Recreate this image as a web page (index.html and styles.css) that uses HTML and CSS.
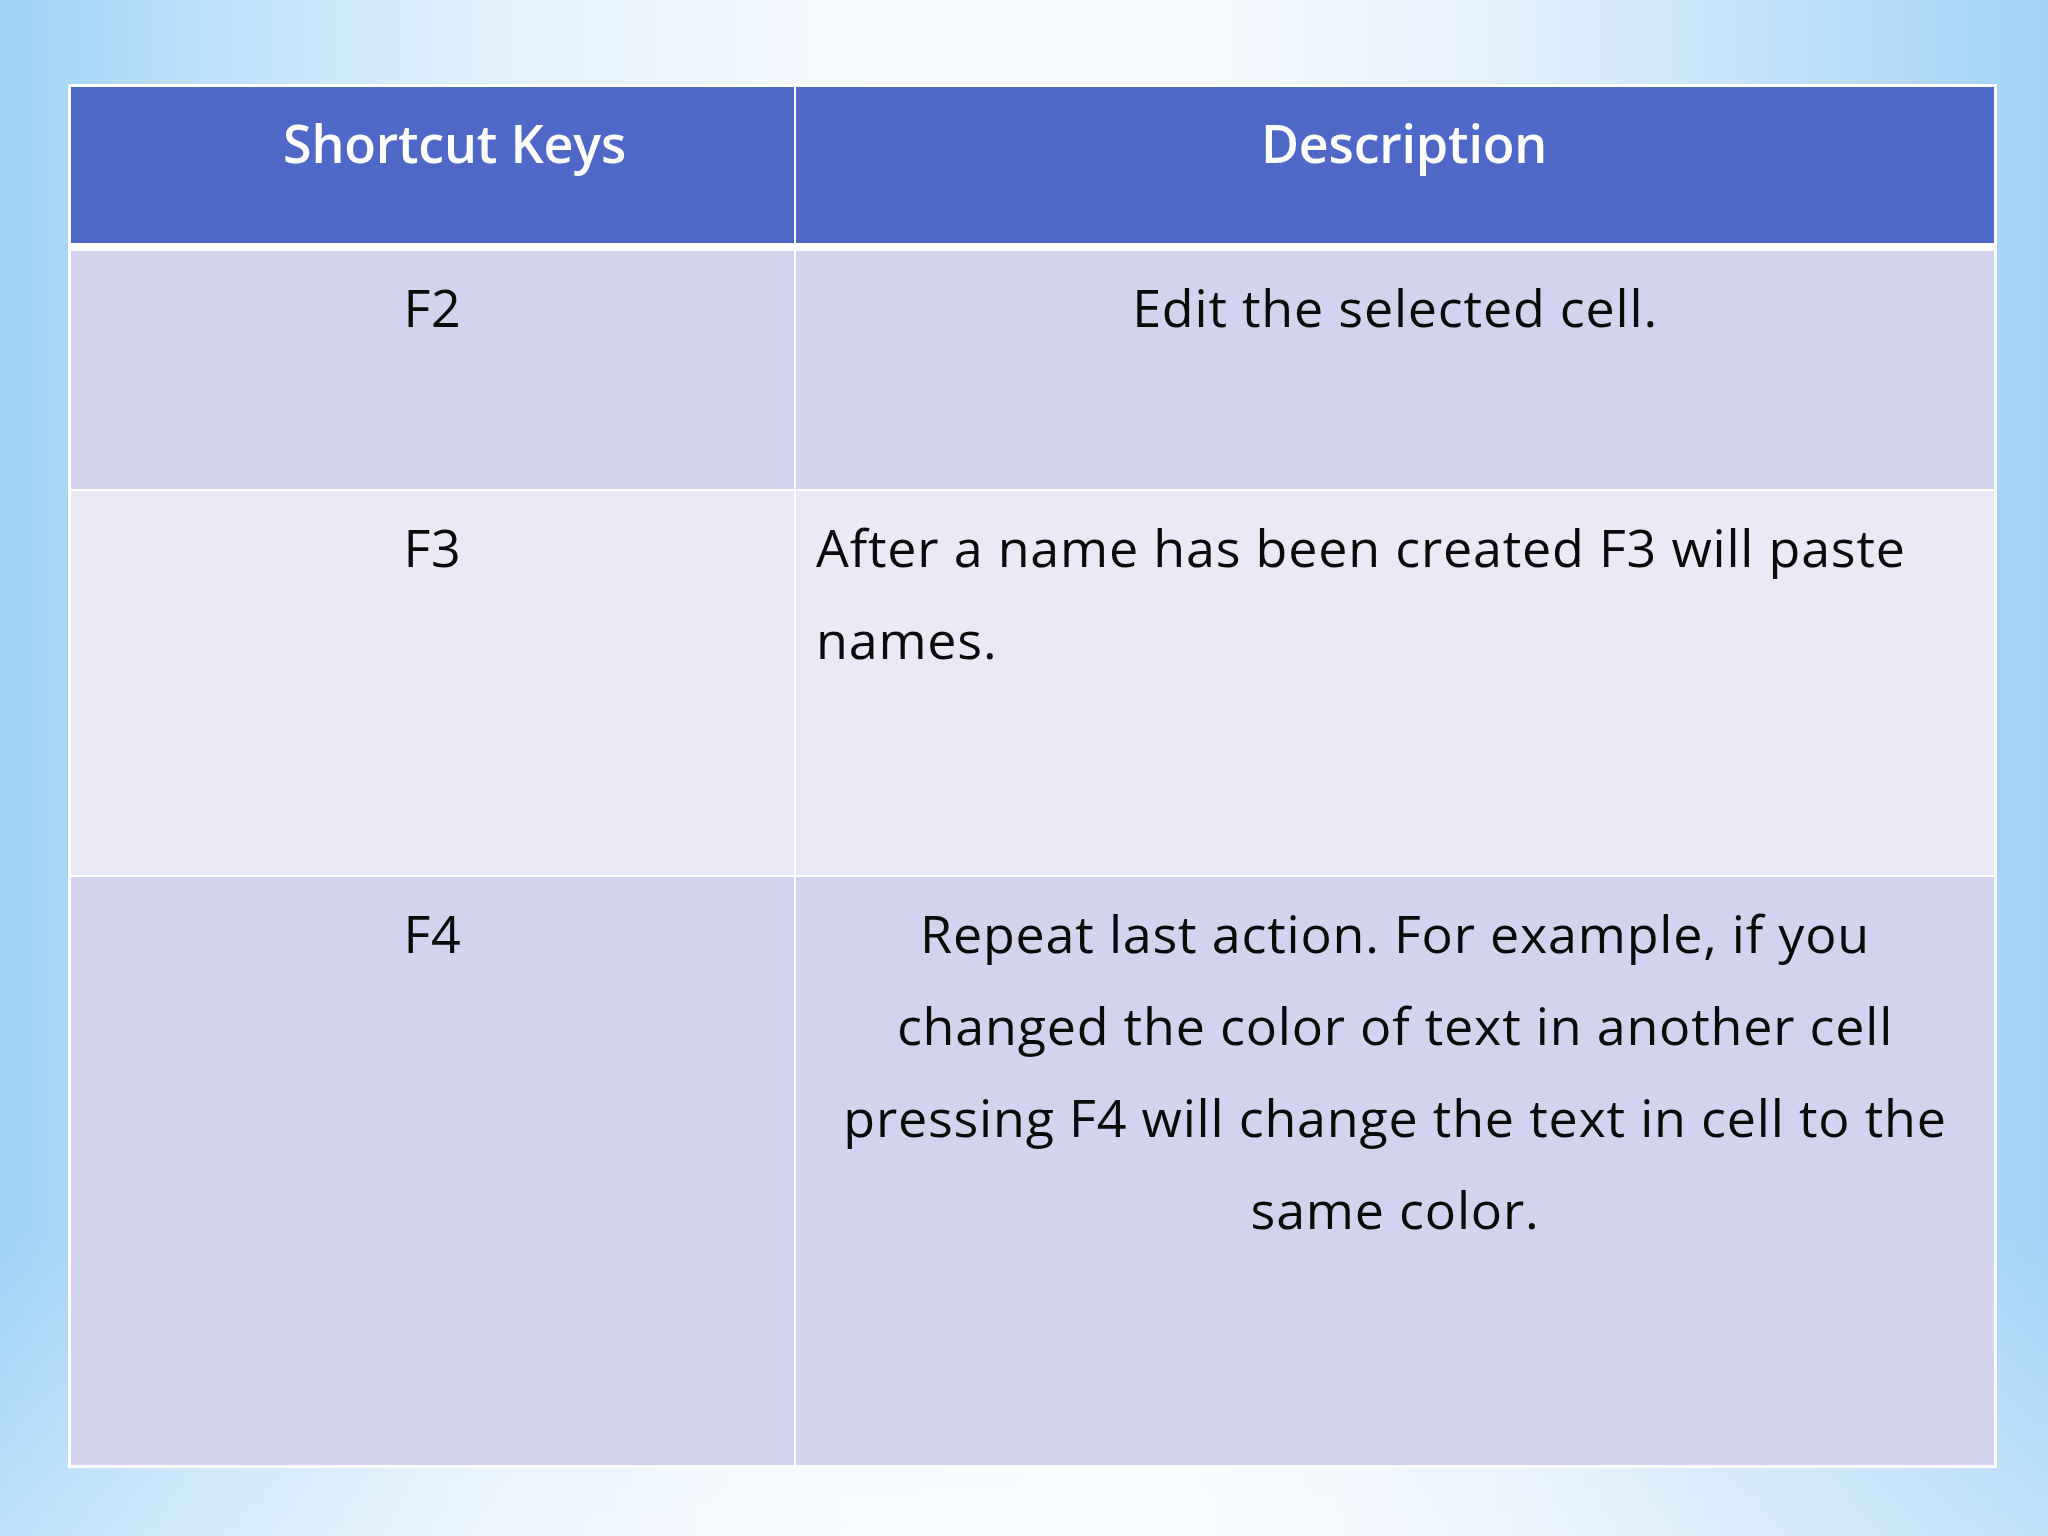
FILE: index.html
```html
<!DOCTYPE html>
<html lang="en">
<head>
<meta charset="utf-8">
<title>Shortcut Keys</title>
<link rel="stylesheet" href="styles.css">
</head>
<body>
<div class="slide">
  <div class="table">
    <div class="row head">
      <div class="cell key-h">Shortcut Keys</div>
      <div class="cell desc-h">Description</div>
    </div>
    <div class="row r1 dark">
      <div class="cell key">F2</div>
      <div class="cell desc center">Edit the selected cell.</div>
    </div>
    <div class="row r2 light">
      <div class="cell key">F3</div>
      <div class="cell desc left">After a name has been created F3 will paste<br>names.</div>
    </div>
    <div class="row r3 dark">
      <div class="cell key">F4</div>
      <div class="cell desc center">Repeat last action. For example, if you<br>changed the color of text in another cell<br>pressing F4 will change the text in cell to the<br>same color.</div>
    </div>
  </div>
</div>
</body>
</html>
```

FILE: styles.css
```css
html, body {
  margin: 0;
  padding: 0;
}

body {
  width: 2048px;
  height: 1536px;
  overflow: hidden;
  background:
    linear-gradient(180deg, rgba(255,255,255,0) 0%, rgba(255,255,255,0) 80%, rgba(255,255,255,0.35) 100%),
    linear-gradient(90deg, #9dd1f6 0%, #bde1fa 10%, #e1f1fd 24%, #f4f9fe 40%, #f6fafe 58%, #e6f2fd 72%, #bfe0f9 88%, #a1d2f6 100%);
  font-family: "Open Sans", "Liberation Sans", sans-serif;
}

.slide {
  padding: 84px 0 0 68px;
}

.table {
  width: 1929px;
  box-sizing: border-box;
  background: #ffffff;
  padding: 3px;
  display: flex;
  flex-direction: column;
  gap: 2px;
}

.row {
  display: grid;
  grid-template-columns: 723px 1fr;
  column-gap: 2px;
}

.head {
  height: 156px;
  margin-bottom: 6px;
}

.r1 { height: 238px; }
.r2 { height: 384px; }
.r3 { height: 588px; }

.head .cell {
  background: #4f68c8;
  color: #ffffff;
  font-weight: 600;
  font-size: 52px;
  letter-spacing: -0.2px;
  line-height: 76px;
  padding-top: 18px;
  text-align: center;
}

.key-h { padding-left: 44px; }
.desc-h { padding-left: 18px; }

.dark .cell { background: #d2d3ee; }
.light .cell { background: #e9eaf6; }

.row:not(.head) .cell {
  color: #0a0a0a;
  font-size: 52px;
  letter-spacing: 0.8px;
  line-height: 92px;
  padding-top: 10px;
}

.key { text-align: center; }
.center { text-align: center; }
.left { text-align: left; padding-left: 20px; }

.cell {
  box-sizing: border-box;
  white-space: nowrap;
}
```
